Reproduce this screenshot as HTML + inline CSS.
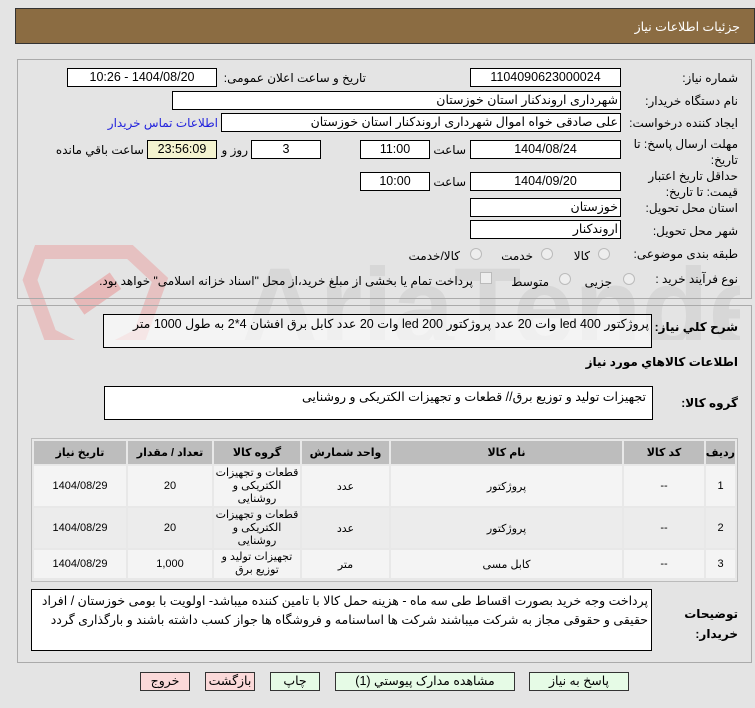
<!DOCTYPE html>
<html><head><meta charset="utf-8"><style>
*{box-sizing:border-box;margin:0;padding:0}
body{width:755px;height:708px;background:#e4e4e4;font-family:"Liberation Sans","DejaVu Sans",sans-serif;font-size:11.5px;color:#000;position:relative;overflow:hidden;direction:rtl}
.a{position:absolute}
.hdr{left:15px;top:8px;width:740px;height:36px;background:#8b6c42;border:1px solid #333;color:#fff;font-size:12.5px;padding:10px 14px 0 0;text-align:right}
.panel{border:1px solid #aaa;left:17px;width:735px}
.box{position:absolute;background:#fff;border:1px solid #000;height:19px;text-align:center;line-height:17px;font-size:12.5px;white-space:nowrap;overflow:hidden}
.bl{text-align:right;padding-right:2px}
.lb{position:absolute;text-align:right;white-space:nowrap;font-size:12px}
.rad{position:absolute;width:12px;height:12px;border-radius:50%;border:1px solid #bbb;background:#eee}
table{border-collapse:separate;border-spacing:2px;font-size:11px;table-layout:fixed}
th{background:#bdbdbd;height:23px;font-weight:bold}
td{text-align:center;background:#f4f4f4;overflow:hidden}
tr.e td{background:#ececec}
.btn{position:absolute;top:672px;height:19px;border:1px solid #333;text-align:center;line-height:17px;font-size:12.5px}
</style></head><body>
<svg class="a" style="left:20px;top:240px" width="720" height="100" viewBox="0 0 720 100">
<path d="M20 12 L110 12 L140 40 L120 95 L75 118 L30 95 L10 40Z" fill="none" stroke="#e6b8b8" stroke-width="14" opacity=".8"/>
<rect x="55" y="45" width="45" height="20" fill="#e6b8b8" transform="rotate(-35 75 55)"/>
<text x="220" y="105" font-family="Liberation Sans" font-weight="bold" font-size="110" fill="#cfcfcf" direction="ltr" opacity=".6">AriaTender.net</text>
</svg>
<div class="a hdr">جزئیات اطلاعات نیاز</div>
<div class="a panel" style="top:59px;height:240px"></div>
<div class="a panel" style="top:305px;height:358px"></div>

<div class="lb" style="right:17px;top:71px">شماره نیاز:</div>
<div class="box" style="left:470px;top:68px;width:151px">1104090623000024</div>
<div class="lb" style="right:389px;top:71px">تاریخ و ساعت اعلان عمومی:</div>
<div class="box" style="left:67px;top:68px;width:150px">1404/08/20 - 10:26</div>

<div class="lb" style="right:17px;top:94px">نام دستگاه خریدار:</div>
<div class="box bl" style="left:172px;top:91px;width:449px">شهرداری اروندکنار استان خوزستان</div>

<div class="lb" style="right:17px;top:116px">ایجاد کننده درخواست:</div>
<div class="box bl" style="left:221px;top:113px;width:400px">علی صادقی خواه اموال شهرداری اروندکنار استان خوزستان</div>
<div class="lb" style="right:537px;top:116px;color:#2222dd">اطلاعات تماس خریدار</div>

<div class="lb" style="right:17px;top:136px;line-height:16px">مهلت ارسال پاسخ: تا<br>تاریخ:</div>
<div class="box" style="left:470px;top:140px;width:151px">1404/08/24</div>
<div class="lb" style="right:289px;top:143px">ساعت</div>
<div class="box" style="left:360px;top:140px;width:70px">11:00</div>
<div class="box" style="left:251px;top:140px;width:70px">3</div>
<div class="lb" style="right:507px;top:143px">روز و</div>
<div class="box" style="left:147px;top:140px;width:70px;background:#f4f3cf">23:56:09</div>
<div class="lb" style="right:611px;top:143px">ساعت باقي مانده</div>

<div class="lb" style="right:17px;top:168px;line-height:16px">حداقل تاریخ اعتبار<br>قیمت: تا تاریخ:</div>
<div class="box" style="left:470px;top:172px;width:151px">1404/09/20</div>
<div class="lb" style="right:289px;top:175px">ساعت</div>
<div class="box" style="left:360px;top:172px;width:70px">10:00</div>

<div class="lb" style="right:17px;top:201px">استان محل تحویل:</div>
<div class="box bl" style="left:470px;top:198px;width:151px">خوزستان</div>
<div class="lb" style="right:17px;top:224px">شهر محل تحویل:</div>
<div class="box bl" style="left:470px;top:220px;width:151px">اروندکنار</div>

<div class="lb" style="right:17px;top:247px">طبقه بندی موضوعی:</div>
<div class="rad" style="left:598px;top:248px"></div><div class="lb" style="right:165px;top:249px">کالا</div>
<div class="rad" style="left:541px;top:248px"></div><div class="lb" style="right:222px;top:249px">خدمت</div>
<div class="rad" style="left:470px;top:248px"></div><div class="lb" style="right:295px;top:249px">کالا/خدمت</div>

<div class="lb" style="right:17px;top:272px">نوع فرآیند خرید :</div>
<div class="rad" style="left:623px;top:273px"></div><div class="lb" style="right:143px;top:275px">جزیی</div>
<div class="rad" style="left:559px;top:273px"></div><div class="lb" style="right:206px;top:275px">متوسط</div>
<div class="a" style="left:480px;top:272px;width:12px;height:12px;border:1px solid #bbb;background:#eee"></div>
<div class="lb" style="right:282px;top:274px">پرداخت تمام یا بخشی از مبلغ خرید،از محل "اسناد خزانه اسلامی" خواهد بود.</div>

<div class="lb" style="right:17px;top:320px;font-weight:bold">شرح كلي نياز:</div>
<div class="box bl" style="left:103px;top:314px;width:549px;height:34px;background:rgba(255,255,255,.6);font-size:12.5px;padding-top:1px">پروژکتور 400 led وات 20 عدد پروژکتور 200 led وات 20 عدد کابل برق افشان 4*2 به طول 1000 متر</div>
<div class="lb" style="right:17px;top:355px;font-weight:bold">اطلاعات كالاهاي مورد نياز</div>
<div class="lb" style="right:17px;top:396px;font-weight:bold">گروه کالا:</div>
<div class="box bl" style="left:104px;top:386px;width:549px;height:34px;padding-right:6px;padding-top:2px;font-size:12.5px">تجهیزات تولید و توزیع برق// قطعات و تجهیزات الکتریکی و روشنایی</div>

<div class="a" style="left:31px;top:438px;width:707px;height:144px;border:1px solid #bbb;background:#e8e8e8;overflow:hidden">
<table style="width:705px">
<colgroup><col style="width:29px"><col style="width:80px"><col><col style="width:87px"><col style="width:86px"><col style="width:84px"><col style="width:92px"></colgroup>
<tr><th>ردیف</th><th>کد کالا</th><th>نام کالا</th><th>واحد شمارش</th><th>گروه کالا</th><th>تعداد / مقدار</th><th>تاریخ نیاز</th></tr>
<tr><td style="height:40px">1</td><td>--</td><td>پروژکتور</td><td>عدد</td><td style="line-height:13px;font-size:11px">قطعات و تجهیزات الکتریکی و روشنایی</td><td>20</td><td>1404/08/29</td></tr>
<tr class="e"><td style="height:40px">2</td><td>--</td><td>پروژکتور</td><td>عدد</td><td style="line-height:13px;font-size:11px">قطعات و تجهیزات الکتریکی و روشنایی</td><td>20</td><td>1404/08/29</td></tr>
<tr><td style="height:28px">3</td><td>--</td><td>کابل مسی</td><td>متر</td><td style="line-height:13px;font-size:11px">تجهیزات تولید و توزیع برق</td><td>1,000</td><td>1404/08/29</td></tr>
</table></div>

<div class="lb" style="right:17px;top:604px;font-weight:bold;line-height:20px">توضیحات<br>خریدار:</div>
<div class="box bl" style="left:31px;top:589px;width:621px;height:62px;text-align:right;line-height:19px;padding:2px 3px;white-space:normal;font-size:12.5px">پرداخت وجه خرید بصورت اقساط طی سه ماه - هزینه حمل کالا با تامین کننده میباشد- اولویت با بومی خوزستان / افراد حقیقی و حقوقی مجاز به شرکت میباشند شرکت ها اساسنامه و فروشگاه ها جواز کسب داشته باشند و بارگذاری گردد</div>

<div class="btn" style="left:529px;width:100px;background:#e6fbe6">پاسخ به نیاز</div>
<div class="btn" style="left:335px;width:180px;background:#e6fbe6">مشاهده مدارک پیوستي (1)</div>
<div class="btn" style="left:270px;width:50px;background:#e6fbe6">چاپ</div>
<div class="btn" style="left:205px;width:50px;background:#fbd9d9">بازگشت</div>
<div class="btn" style="left:140px;width:50px;background:#fbd9d9">خروج</div>
</body></html>
